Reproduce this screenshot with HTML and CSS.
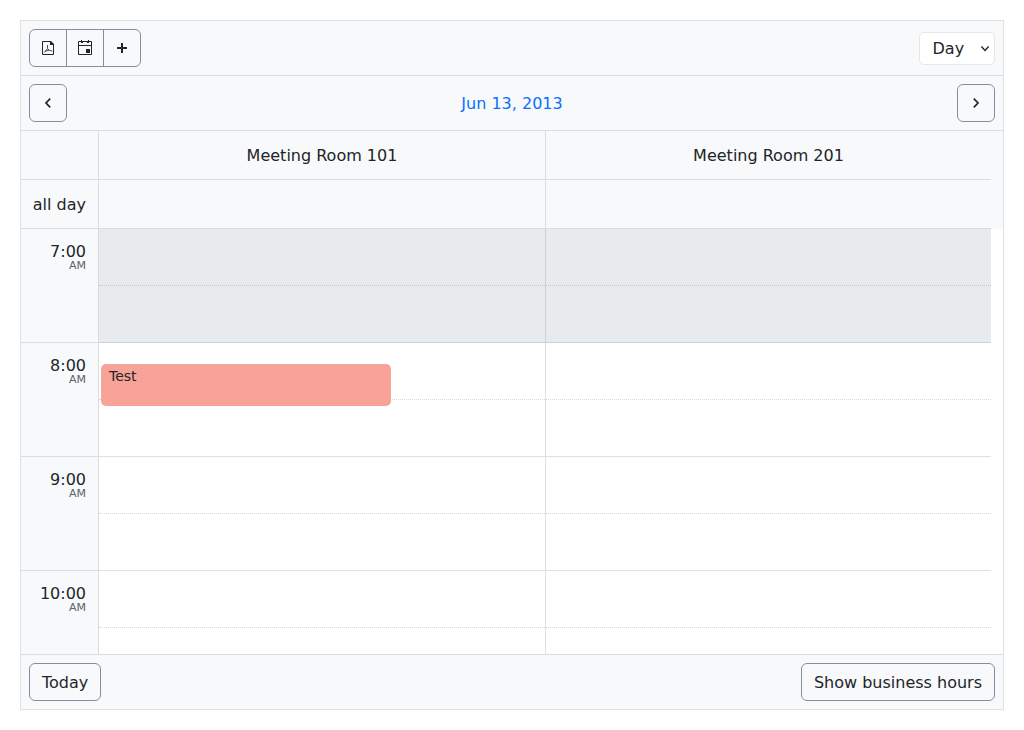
FILE: index.html
```html
<!DOCTYPE html>
<html lang="en">
<head>
<meta charset="utf-8">
<title>Scheduler</title>
<link rel="stylesheet" href="styles.css">
</head>
<body>
<div class="scheduler">
  <header class="bar">
    <div class="btn-group">
      <button class="btn icon-btn" aria-label="Export to PDF"><svg viewBox="0 0 16 16"><path d="M2.5 1.5H10.5L13.5 4.5V14.5H2.5Z" fill="none" stroke="currentColor"/><path d="M10 1H11L14 4V5H10Z" fill="currentColor"/><path d="M7.5 5V8.7L4.2 12.4M7.5 8.7L9.3 10.3L12.3 11M5.2 11.2L9 10.2" fill="none" stroke="currentColor" stroke-width=".8"/></svg></button>
      <button class="btn icon-btn" aria-label="Calendar"><svg viewBox="0 0 16 16"><path d="M1.5 1.5H14.5V14.5H1.5ZM1.5 5.5H14.5" fill="none" stroke="currentColor"/><path d="M4 0H5V3H4ZM11 0H12V3H11ZM9 9H13V13H9Z" fill="currentColor"/><path d="M4 1H6V3H4ZM10 1H12V3H10Z" fill="currentColor"/></svg></button>
      <button class="btn icon-btn" aria-label="Add"><svg viewBox="0 0 16 16"><path d="M7 3H9V7H13V9H9V13H7V9H3V7H7Z" fill="currentColor"/></svg></button>
    </div>
    <div class="view-select"><span>Day</span><svg viewBox="0 0 16 16"><path d="M4.4 6.6L8 10.4L11.6 6.6" fill="none" stroke="currentColor" stroke-width="1.4"/></svg></div>
  </header>
  <nav class="bar">
    <button class="btn icon-btn" aria-label="Previous"><svg viewBox="0 0 16 16"><path d="M10.2 3.6L6 8L10.2 12.4" fill="none" stroke="currentColor" stroke-width="1.7"/></svg></button>
    <a class="date">Jun 13, 2013</a>
    <button class="btn icon-btn" aria-label="Next"><svg viewBox="0 0 16 16"><path d="M5.8 3.6L10 8L5.8 12.4" fill="none" stroke="currentColor" stroke-width="1.7"/></svg></button>
  </nav>
  <div class="head">
    <div class="row"><div class="label"></div><div class="cell">Meeting Room 101</div><div class="cell">Meeting Room 201</div></div>
    <div class="row"><div class="label">all day</div><div class="cell"></div><div class="cell"></div></div>
  </div>
  <main class="hours">
    <div class="hour off"><div class="time">7:00<small>AM</small></div><div class="slot"></div><div class="slot"></div></div>
    <div class="hour"><div class="time">8:00<small>AM</small></div><div class="slot"><div class="event">Test</div></div><div class="slot"></div></div>
    <div class="hour"><div class="time">9:00<small>AM</small></div><div class="slot"></div><div class="slot"></div></div>
    <div class="hour"><div class="time">10:00<small>AM</small></div><div class="slot"></div><div class="slot"></div></div>
  </main>
  <footer class="bar foot">
    <button class="btn">Today</button>
    <button class="btn">Show business hours</button>
  </footer>
</div>
</body>
</html>
```
FILE: styles.css
```css
* { box-sizing: border-box; }
body {
  margin: 0;
  padding: 20px;
  background: #fff;
  color: #212529;
  font: 16px/24px "DejaVu Sans", sans-serif;
}
.scheduler {
  display: flex;
  flex-direction: column;
  height: 690px;
  border: 1px solid #dfe0e1;
}
.bar {
  display: flex;
  flex: none;
  align-items: center;
  justify-content: space-between;
  height: 55px;
  padding: 0 8px;
  background: #f8f9fb;
  border-bottom: 1px solid #dadcde;
}
.foot { border-bottom: 0; border-top: 1px solid #dadcde; }
.btn {
  display: flex;
  align-items: center;
  justify-content: center;
  height: 38px;
  padding: 1px 12px 0;
  border: 1px solid #8a8a9e;
  border-radius: 6px;
  background: transparent;
  color: inherit;
  font: inherit;
}
.icon-btn { width: 38px; padding: 0; }
.btn svg, .view-select svg { display: block; width: 16px; height: 16px; }
.btn-group { display: flex; }
.btn-group .btn + .btn { margin-left: -1px; }
.btn-group .btn:not(:first-child) { border-top-left-radius: 0; border-bottom-left-radius: 0; }
.btn-group .btn:not(:last-child) { border-top-right-radius: 0; border-bottom-right-radius: 0; }
.view-select {
  display: flex;
  align-items: center;
  justify-content: space-between;
  width: 76px;
  height: 33px;
  padding: 0 1px 0 12.5px;
  border: 1px solid #e4e6e8;
  border-radius: 5px;
  background: #fff;
}
.view-select span { padding-top: 2px; }
.date { padding-top: 2px; color: #0d6efd; }
.head { flex: none; background: #f8f9fb; padding-right: 12px; }
.row, .hour { display: grid; grid-template-columns: 78px 447px 445px; }
.row { height: 49px; border-bottom: 1px solid #dadcde; line-height: 50px; }
.label { height: 48px; border-right: 1px solid #dadcde; padding-right: 12px; text-align: right; }
.cell { height: 48px; text-align: center; }
.cell:nth-child(2) { border-right: 1px solid #dadcde; }
.hours { flex: 1; min-height: 0; overflow: hidden; padding-right: 12px; }
.hour { height: 114px; }
.time {
  padding: 11px 12px 0 0;
  background: #f8f9fb;
  border-right: 1px solid #dadcde;
  border-bottom: 1px solid #dadcde;
  text-align: right;
}
.time small {
  display: block;
  margin-top: -4px;
  color: #5c6268;
  font-size: 11px;
  line-height: 12px;
}
.slot { position: relative; border-bottom: 1px solid #dfe0e1; }
.slot:nth-child(2) { border-right: 1px solid #dfe0e1; }
.slot::before { content: ""; display: block; height: 56px; border-bottom: 1px dotted #d6d8da; }
.off .slot { background: #e8ebee; border-color: #ced1d3; }
.off .slot::before { border-color: #c5c8cb; }
.event {
  position: absolute;
  top: 21px;
  left: 2px;
  width: 290px;
  height: 42px;
  padding: 2px 8px;
  border-radius: 5px;
  background: #f8a398;
  font-size: 14px;
  line-height: 21px;
}
```
